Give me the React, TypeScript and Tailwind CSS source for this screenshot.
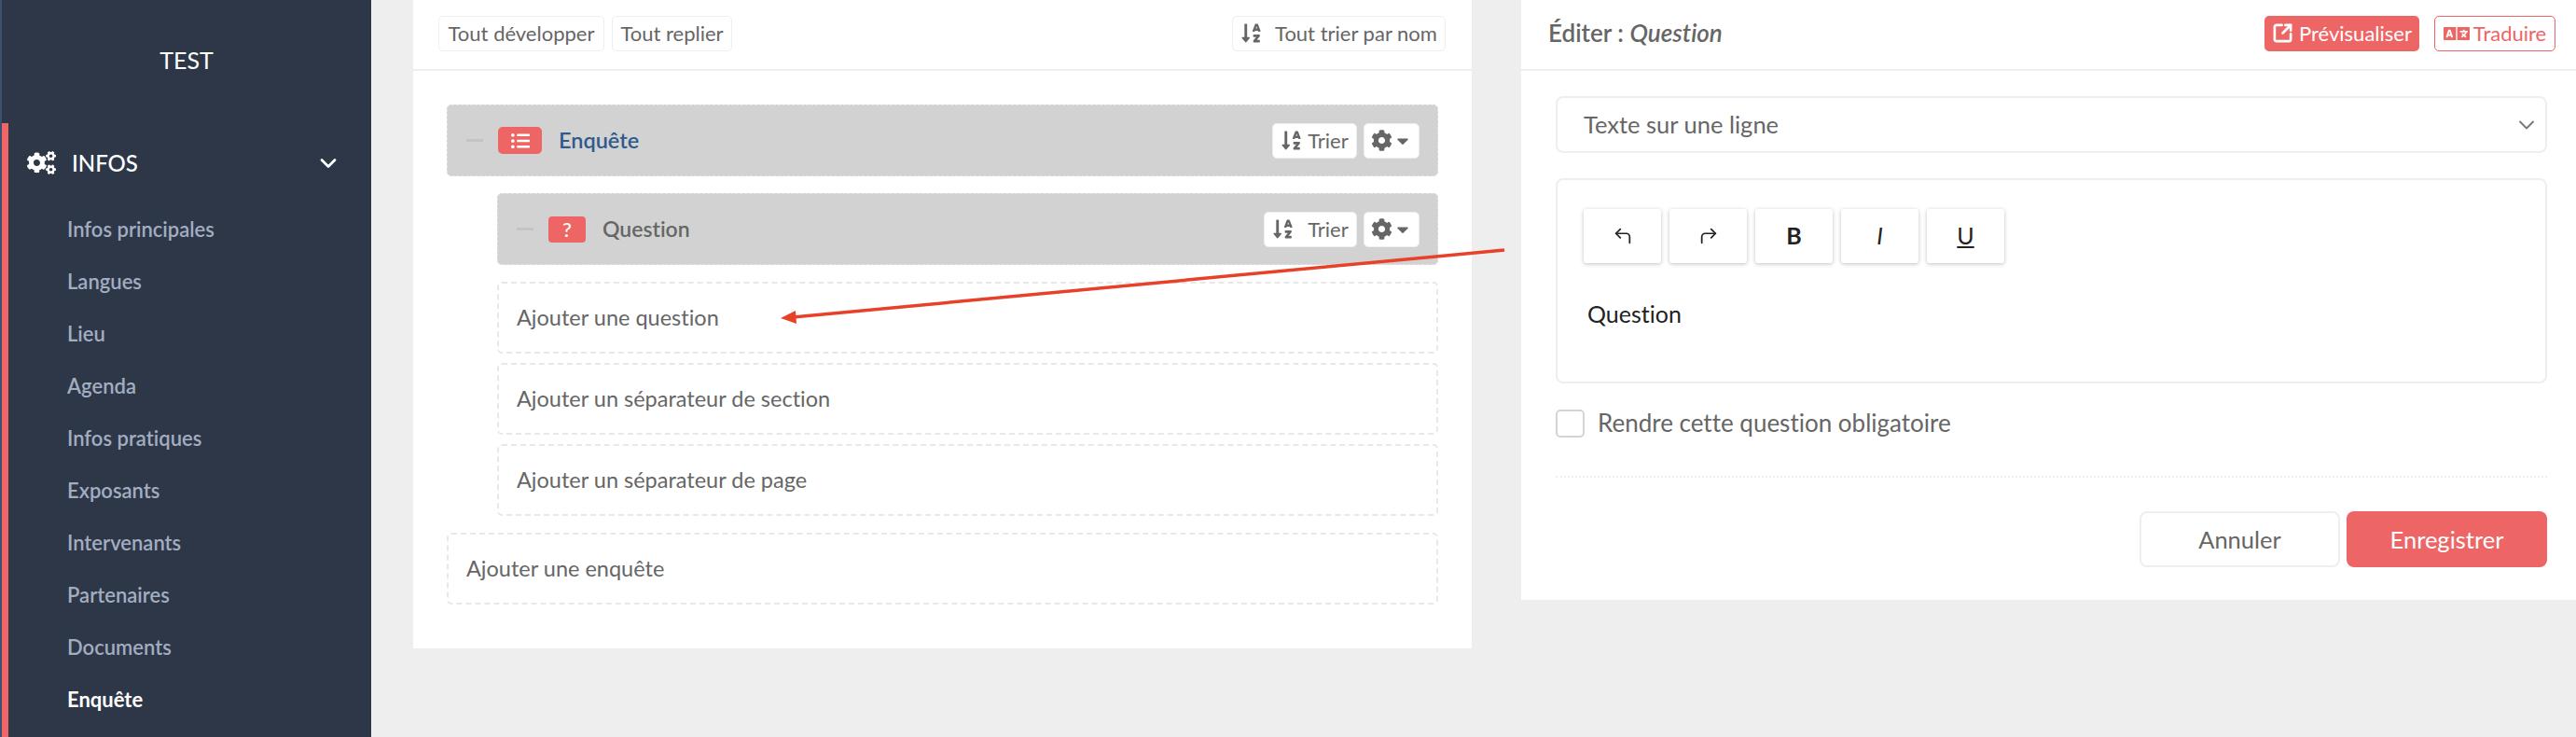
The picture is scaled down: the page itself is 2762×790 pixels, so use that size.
import { ChevronDown, CornerUpLeft, CornerUpRight, SquareArrowOutUpRight } from 'lucide-react';
import { FaCaretDown, FaCog, FaCogs, FaLanguage, FaListUl, FaSortAlphaDown } from 'react-icons/fa';

const navItems = [
  'Infos principales',
  'Langues',
  'Lieu',
  'Agenda',
  'Infos pratiques',
  'Exposants',
  'Intervenants',
  'Partenaires',
  'Documents',
];

function Sidebar() {
  return (
    <aside className="w-[398px] shrink-0 h-full bg-[#2d3748] border-l-2 border-[#3f4f6f] flex flex-col">
      <div className="h-[132px] shrink-0 pt-[47px] text-center text-[25px] leading-[34px] text-white">TEST</div>
      <div className="flex-1 border-l-[7px] border-[#f06565]">
        <div className="h-[85px] flex items-center pl-5 pr-[32px] text-white">
          <FaCogs className="text-[31px] mr-[17px]" />
          <span className="text-[24px] font-medium">INFOS</span>
          <ChevronDown className="ml-auto w-7 h-7" strokeWidth={2.4} />
        </div>
        <nav className="flex flex-col pl-[63px]">
          {navItems.map((item) => (
            <a key={item} className="h-14 flex items-center text-[22px] font-semibold text-[#a3adc0]">
              {item}
            </a>
          ))}
          <a className="h-14 flex items-center text-[22px] font-bold text-white">Enquête</a>
        </nav>
      </div>
    </aside>
  );
}

function TreeRow({ label, strong, narrow }: { label: string; strong?: boolean; narrow?: boolean }) {
  return (
    <div className={`h-[77px] bg-[#d2d2d2] border border-dashed border-[#e2e2e2] rounded-[5px] flex items-center pl-5 pr-[19px] ${narrow ? 'ml-[54px]' : ''}`}>
      <span className="w-[18px] h-[3px] bg-[#c4c4c4] mr-[16px]" />
      {strong ? (
        <span className="w-[47px] h-[29px] rounded-[5px] bg-[#ee6566] flex items-center justify-center text-white text-[20px] mr-[18px]">
          <FaListUl />
        </span>
      ) : (
        <span className="w-10 h-[28px] rounded-[4px] bg-[#ee6566] flex items-center justify-center text-white text-[22px] font-medium mr-[18px]">
          ?
        </span>
      )}
      <span className={`font-semibold ${strong ? 'text-[23.5px] text-[#2f5a8e]' : 'text-[23px] text-[#666]'}`}>{label}</span>
      <div className="ml-auto flex items-center gap-[7px] text-[#666]">
        <button className={`h-[38px] bg-white border border-[#eee] rounded-[5px] flex items-center justify-center text-[22px] ${strong ? 'w-[91px] gap-[6px]' : 'w-[100px] gap-[15px]'}`}>
          <FaSortAlphaDown className="text-[23px]" />
          Trier
        </button>
        <button className="w-[60px] h-[38px] bg-white border border-[#eee] rounded-[5px] flex items-center justify-center gap-[1px]">
          <FaCog className="text-[23px]" />
          <FaCaretDown className="text-[20px]" />
        </button>
      </div>
    </div>
  );
}

function AddRow({ label, narrow }: { label: string; narrow?: boolean }) {
  return (
    <div className={`h-[77px] border-2 border-dashed border-[#e8e8e8] rounded-[5px] flex items-center pl-[19px] text-[23.5px] text-[#666] ${narrow ? 'ml-[54px]' : ''}`}>
      {label}
    </div>
  );
}

function TreePanel() {
  return (
    <section className="ml-[45px] w-[1135px] shrink-0 h-[695px] bg-white">
      <div className="h-[76px] border-b-2 border-[#eee] flex items-center pl-[27px] pr-[28px] pb-[3px] gap-2 text-[22px] text-[#666]">
        <button className="w-[178px] h-[38px] border border-[#eee] rounded-[5px]">Tout développer</button>
        <button className="w-[129px] h-[38px] border border-[#eee] rounded-[5px]">Tout replier</button>
        <button className="ml-auto w-[229px] h-[38px] border border-[#eee] rounded-[5px] flex items-center justify-center gap-[14px]">
          <FaSortAlphaDown className="text-[23px]" />
          Tout trier par nom
        </button>
      </div>
      <div className="pt-[36px] pl-9 pr-9 flex flex-col">
        <TreeRow label="Enquête" strong />
        <div className="h-[18px]" />
        <TreeRow label="Question" narrow />
        <div className="h-[18px]" />
        <div className="flex flex-col gap-[10px]">
          <AddRow label="Ajouter une question" narrow />
          <AddRow label="Ajouter un séparateur de section" narrow />
          <AddRow label="Ajouter un séparateur de page" narrow />
        </div>
        <div className="h-[18px]" />
        <AddRow label="Ajouter une enquête" />
      </div>
    </section>
  );
}

function EditorButton({ children }: { children: React.ReactNode }) {
  return (
    <button className="w-[83px] h-[58px] bg-white rounded-[3px] shadow-[0_1px_4px_rgba(0,0,0,0.25)] flex items-center justify-center text-[#222] text-[25px]">
      {children}
    </button>
  );
}

function EditPanel() {
  return (
    <section className="ml-[53px] flex-1 h-[643px] bg-white">
      <div className="h-[76px] border-b-2 border-[#eee] flex items-center pl-[29px] pr-[22px] pb-[3px] text-[22px]">
        <span className="text-[26px] font-semibold text-[#666]">
          Éditer : <em>Question</em>
        </span>
        <button className="ml-auto w-[166px] h-[38px] bg-[#ee6566] rounded-[5px] flex items-center justify-center gap-[6px] text-white">
          <SquareArrowOutUpRight className="w-[23px] h-[23px]" strokeWidth={2.8} />
          Prévisualiser
        </button>
        <button className="ml-[16px] w-[130px] h-[38px] border border-[#ee6566] rounded-[5px] flex items-center justify-center gap-[4px] text-[#ee6566]">
          <FaLanguage className="text-[28px]" />
          Traduire
        </button>
      </div>
      <div className="pt-[27px] pl-[37px] pr-[31px]">
        <div className="h-[61px] border-2 border-[#eee] rounded-[8px] flex items-center pl-[28px] pr-[6px] text-[25.5px] text-[#666]">
          Texte sur une ligne
          <ChevronDown className="ml-auto w-7 h-7 text-[#777]" strokeWidth={1.6} />
        </div>
        <div className="mt-[27px] h-[220px] border-2 border-[#eee] rounded-[8px] pt-[31px] pl-[28px]">
          <div className="flex gap-[9px]">
            <EditorButton><CornerUpLeft className="w-[22px] h-[22px]" strokeWidth={1.9} /></EditorButton>
            <EditorButton><CornerUpRight className="w-[22px] h-[22px]" strokeWidth={1.9} /></EditorButton>
            <EditorButton><b>B</b></EditorButton>
            <EditorButton><i>I</i></EditorButton>
            <EditorButton><u>U</u></EditorButton>
          </div>
          <p className="mt-[36px] pl-[4px] text-[25px] leading-[36px] text-[#222]">Question</p>
        </div>
        <label className="mt-[23px] flex items-center gap-[14px] text-[26px] text-[#666]">
          <span className="w-[31px] h-[30px] border-2 border-[#d4d4d4] rounded-[5px]" />
          Rendre cette question obligatoire
        </label>
        <div className="mt-[37px] border-t-2 border-dotted border-[#eee]" />
        <div className="mt-[36px] flex justify-end gap-[7px] text-[25.5px]">
          <button className="w-[215px] h-[60px] border-2 border-[#eee] rounded-[8px] text-[#666]">Annuler</button>
          <button className="w-[215px] h-[60px] bg-[#ee6566] rounded-[8px] text-white">Enregistrer</button>
        </div>
      </div>
    </section>
  );
}

export default function App() {
  return (
    <div className="relative w-[2762px] h-[790px] overflow-hidden flex bg-[#eee] font-['Lato','Noto_Sans',sans-serif] [font-variant-ligatures:none]">
      <Sidebar />
      <TreePanel />
      <EditPanel />
      {/* annotation arrow drawn over the page */}
      <svg className="absolute left-0 top-0" width="2762" height="790" viewBox="0 0 2762 790">
        <line x1="1613" y1="268" x2="850" y2="340" stroke="#e8412a" strokeWidth="3.5" />
        <path d="M837 341 L853 333 L854 347 Z" fill="#e8412a" />
      </svg>
    </div>
  );
}
